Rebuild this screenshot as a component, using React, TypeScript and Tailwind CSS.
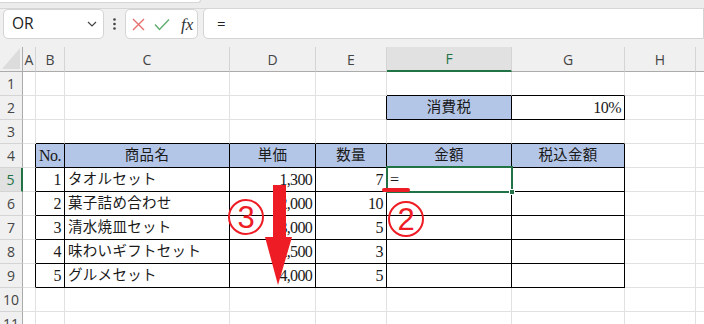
import React from 'react';

type Cell = { t?: string; align?: 'l' | 'c' | 'r'; blue?: boolean; num?: boolean; tight?: boolean };

const data: Record<string, Cell> = {
  '2-6': { t: '消費税', align: 'c', blue: true },
  '2-7': { t: '10%', align: 'r', num: true },
  '4-2': { t: 'No.', align: 'c', blue: true, num: true },
  '4-3': { t: '商品名', align: 'c', blue: true },
  '4-4': { t: '単価', align: 'c', blue: true },
  '4-5': { t: '数量', align: 'c', blue: true },
  '4-6': { t: '金額', align: 'c', blue: true },
  '4-7': { t: '税込金額', align: 'c', blue: true },
  '5-2': { t: '1', align: 'r', num: true },
  '6-2': { t: '2', align: 'r', num: true },
  '7-2': { t: '3', align: 'r', num: true },
  '8-2': { t: '4', align: 'r', num: true },
  '9-2': { t: '5', align: 'r', num: true },
  '5-3': { t: 'タオルセット', align: 'l' },
  '6-3': { t: '菓子詰め合わせ', align: 'l' },
  '7-3': { t: '清水焼皿セット', align: 'l' },
  '8-3': { t: '味わいギフトセット', align: 'l' },
  '9-3': { t: 'グルメセット', align: 'l' },
  '5-4': { t: '1,300', align: 'r', num: true, tight: true },
  '6-4': { t: '2,000', align: 'r', num: true, tight: true },
  '7-4': { t: '3,000', align: 'r', num: true, tight: true },
  '8-4': { t: '2,500', align: 'r', num: true, tight: true },
  '9-4': { t: '4,000', align: 'r', num: true, tight: true },
  '5-5': { t: '7', align: 'r', num: true },
  '6-5': { t: '10', align: 'r', num: true },
  '7-5': { t: '5', align: 'r', num: true },
  '8-5': { t: '3', align: 'r', num: true },
  '9-5': { t: '5', align: 'r', num: true },
  '5-6': { t: '=', align: 'l', num: true },
};

const inTable = (r: number, c: number) =>
  (r >= 4 && r <= 9 && c >= 2 && c <= 7) || (r === 2 && (c === 6 || c === 7));

const letters = ['A', 'B', 'C', 'D', 'E', 'F', 'G', 'H', ''];

function SheetCell({ r, c }: { r: number; c: number }) {
  const rightBlack = inTable(r, c) || inTable(r, c + 1);
  const bottomBlack = inTable(r, c) || inTable(r + 1, c);
  const rb = c === 9 ? '' : rightBlack ? 'border-r border-r-black' : 'border-r border-r-[#e1e1e1]';
  const bb = bottomBlack ? 'border-b border-b-black' : 'border-b border-b-[#e1e1e1]';
  const d = data[`${r}-${c}`];
  const bg = d?.blue ? 'bg-[#b4c6e7]' : 'bg-white';
  const al = d?.align === 'c' ? 'justify-center' : d?.align === 'r' ? 'justify-end pr-[3px]' : 'justify-start pl-[3px]';
  const txt = d?.tight
    ? 'text-[16px] tracking-[-0.7px]'
    : d?.num
    ? 'text-[16px] tracking-[-0.5px]'
    : 'text-[14.5px] tracking-[0.3px]';
  const isSel = r === 5 && c === 6;
  return (
    <div className={`relative flex items-center overflow-visible whitespace-nowrap ${rb} ${bb} ${bg} ${al}`}>
      {d?.t && (
        <span className={`leading-none text-[#1a1a1a] ${txt}`} style={{ fontFamily: '"Liberation Serif", "Noto Sans CJK JP", serif' }}>
          {d.t}
        </span>
      )}
      {isSel && (
        <div className="absolute left-[-1px] top-[-2px] right-[-2px] bottom-[-2px] border-2 border-[#217346] z-10">
          <div className="absolute right-[-4px] bottom-[-4px] w-[6px] h-[6px] bg-[#217346] border border-white" />
        </div>
      )}
    </div>
  );
}

export default function App() {
  const rows = Array.from({ length: 11 }, (_, i) => i + 1);
  return (
    <div className="relative w-[704px] h-[324px] overflow-hidden bg-white" style={{ fontFamily: '"Open Sans", "Noto Sans", sans-serif' }}>
      {/* top strip */}
      <div className="h-[9px] bg-[#ececec] border-b border-b-[#d6d6d6] relative">
        <div className="w-[201px] h-[3px] bg-white rounded-br-[4px] border-b border-r border-[#d6d6d6]" />
      </div>
      {/* formula bar */}
      <div className="h-[38px] bg-[#f0f0f0] flex items-start">
        <div className="ml-[3px] w-[101px] h-[30px] bg-white border border-[#d4d4d4] rounded-[5px] flex items-center justify-between pl-[8px] pr-[6px]">
          <span className="text-[15.5px] text-[#222]">OR</span>
          <svg width="10" height="6" viewBox="0 0 10 6"><path d="M1 1 L5 5 L9 1" fill="none" stroke="#444" strokeWidth="1.2" /></svg>
        </div>
        <div className="w-[21px] h-[30px] flex items-center justify-center">
          <svg width="3" height="12" viewBox="0 0 3 12">
            <circle cx="1.5" cy="1.5" r="1.3" fill="#444" />
            <circle cx="1.5" cy="6" r="1.3" fill="#444" />
            <circle cx="1.5" cy="10.5" r="1.3" fill="#444" />
          </svg>
        </div>
        <div className="w-[73px] h-[30px] bg-white border border-[#d4d4d4] rounded-[5px] flex items-center pl-[6px]">
          <svg width="13" height="13" viewBox="0 0 13 13"><path d="M1 1 L12 12 M12 1 L1 12" stroke="#e76f6f" strokeWidth="1.4" /></svg>
          <svg width="16" height="13" viewBox="0 0 16 13" className="ml-[9px]"><path d="M1 6.5 L5.5 11.5 L15 1.5" fill="none" stroke="#5fae6f" strokeWidth="1.4" /></svg>
          <span className="ml-[11px] text-[17px] italic text-[#333] leading-none" style={{ fontFamily: '"Liberation Serif", serif' }}>fx</span>
        </div>
        <div className="ml-[5px] flex-1 h-[31px] -mt-[1px] bg-white border border-[#d4d4d4] rounded-l-[5px] flex items-center pl-[13px]">
          <span className="text-[15px] text-[#222]">=</span>
        </div>
      </div>
      {/* sheet grid */}
      <div className="grid grid-cols-[23px_13px_29px_165px_86px_71px_125px_113px_71px_1fr] grid-rows-[25px_repeat(11,24px)]">
        <div className="relative bg-[#f0f0f0] border-r border-r-[#ababab] border-b border-b-[#ababab]">
          <svg className="absolute left-[2px] top-[1px]" width="18" height="21" viewBox="0 0 18 21"><polygon points="0,21 18,0 18,21" fill="#dcdcdc" /></svg>
        </div>
        {letters.map((l, i) => (
          <div
            key={l + i}
            className={`flex items-center justify-center text-[14px] ${i === 5 ? 'bg-[#e1e1e1] text-[#217346] border-b-2 border-b-[#217346]' : 'bg-[#f0f0f0] text-[#444] border-b border-b-[#ababab]'} ${i === 8 ? '' : 'border-r border-r-[#d4d4d4]'}`}
          >
            {l}
          </div>
        ))}
        {rows.map((r) => (
          <React.Fragment key={r}>
            <div
              className={`flex items-center justify-center text-[14px] border-b border-b-[#d4d4d4] ${r === 5 ? 'bg-[#e1e1e1] text-[#217346] border-r-2 border-r-[#217346]' : 'bg-[#f0f0f0] text-[#444] border-r border-r-[#ababab]'}`}
            >
              {r}
            </div>
            {Array.from({ length: 9 }, (_, j) => (
              <SheetCell key={j} r={r} c={j + 1} />
            ))}
          </React.Fragment>
        ))}
      </div>
      {/* annotations */}
      <div className="absolute left-[228px] top-[199px] w-[36px] h-[36px] rounded-full border-2 border-[#ee1c25] flex items-center justify-center z-20">
        <span className="text-[31px] leading-none text-[#ee1c25]" style={{ fontFamily: '"Liberation Sans", sans-serif' }}>3</span>
      </div>
      <div className="absolute left-[388px] top-[201px] w-[36px] h-[36px] rounded-full border-2 border-[#ee1c25] flex items-center justify-center z-20">
        <span className="text-[31px] leading-none text-[#ee1c25]" style={{ fontFamily: '"Liberation Sans", sans-serif' }}>2</span>
      </div>
      <svg className="absolute left-[264px] top-[185px] z-20" width="28" height="101" viewBox="0 0 28 101">
        <rect x="9" y="0" width="13" height="53" fill="#ee1c25" />
        <polygon points="1,52 28,52 14,100" fill="#ee1c25" />
      </svg>
      <div className="absolute left-[382px] top-[188px] w-[28px] h-[4px] rounded-full bg-[#ee1c25] z-20" />
    </div>
  );
}
